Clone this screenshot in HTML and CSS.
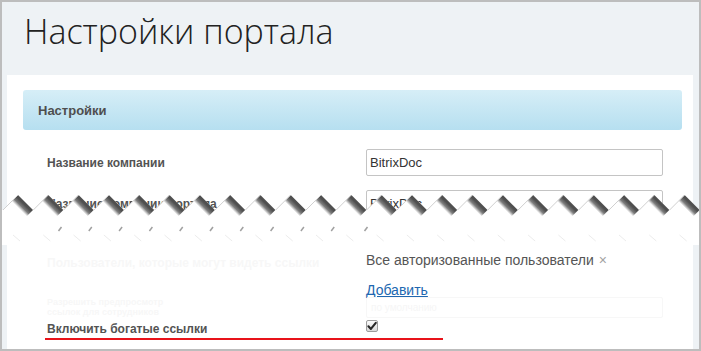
FILE: index.html
```html
<!DOCTYPE html>
<html lang="ru">
<head>
<meta charset="utf-8">
<title>Настройки портала</title>
<link rel="stylesheet" href="styles.css">
</head>
<body>
<div class="frame">
  <h1 class="title">Настройки портала</h1>
  <div class="panel">
    <div class="section-head">Настройки</div>
    <div class="row row-1">
      <div class="label">Название компании</div>
      <div class="input">BitrixDoc</div>
    </div>
    <div class="row row-2">
      <div class="label">Название компании портала</div>
      <div class="input">BitrixDoc</div>
    </div>
    <div class="row row-a">
      <div class="label ghost ghost-label">Пользователи, которые могут видеть ссылки</div>
      <div class="field">
        <div class="tag">Все авторизованные пользователи <span class="remove">×</span></div>
        <a class="add" href="#">Добавить</a>
      </div>
    </div>
    <div class="row row-c">
      <div class="label ghost ghost-two">Разрешить предпросмотр<br>ссылок для сотрудников</div>
      <div class="ghost-input">по умолчанию</div>
    </div>
    <div class="row row-d">
      <div class="label">Включить богатые ссылки</div>
      <div class="field">
        <span class="check"><svg viewBox="0 0 12 12" width="12" height="12"><path d="M2.4 6.3 L4.9 8.9 L9.8 2.8" fill="none" stroke="#262626" stroke-width="2.1" stroke-linecap="round" stroke-linejoin="round"/></svg></span>
      </div>
    </div>
    <div class="redline"></div>
  </div>
  <svg class="tear" viewBox="0 180 701 65" width="701" height="65">
    <defs>
      <linearGradient id="sh" x1="0.6" y1="0.4" x2="0.4" y2="0.6">
        <stop offset="0" stop-color="#505050"/>
        <stop offset="0.5" stop-color="#7c7c7c"/>
        <stop offset="1" stop-color="#ffffff"/>
      </linearGradient>
      <filter id="soft" x="-20%" y="-20%" width="140%" height="140%">
        <feGaussianBlur stdDeviation="0.7"/>
      </filter>
      <g id="tooth">
        <polygon points="0,195 15,210 7,218 -8,203" fill="url(#sh)" filter="url(#soft)"/>
        <line x1="-15" y1="210" x2="0" y2="195" stroke="#d0d0d0" stroke-width="1"/>
        <line x1="-5" y1="235" x2="2" y2="241" stroke="#ececec" stroke-width="1"/>
      </g>
      <path id="mark" d="M-1.5,231 L1.5,227" stroke="#a0a0a0" stroke-width="1.5"/>
    </defs>
    <path d="M0,210 L2.85,210 l15.15,-15 l15.15,15 l15.15,-15 l15.15,15 l15.15,-15 l15.15,15 l15.15,-15 l15.15,15 l15.15,-15 l15.15,15 l15.15,-15 l15.15,15 l15.15,-15 l15.15,15 l15.15,-15 l15.15,15 l15.15,-15 l15.15,15 l15.15,-15 l15.15,15 l15.15,-15 l15.15,15 l15.15,-15 l15.15,15 l15.15,-15 l15.15,15 l15.15,-15 l15.15,15 l15.15,-15 l15.15,15 l15.15,-15 l15.15,15 l15.15,-15 l15.15,15 l15.15,-15 l15.15,15 l15.15,-15 l15.15,15 l15.15,-15 l15.15,15 l15.15,-15 l15.15,15 l15.15,-15 l15.15,15 l15.15,-15 l15.15,15 L730,250 L0,250 Z" fill="#ffffff"/>
    <use href="#tooth" x="18"/>
    <use href="#tooth" x="48.3"/>
    <use href="#tooth" x="78.6"/>
    <use href="#tooth" x="108.9"/>
    <use href="#tooth" x="139.2"/>
    <use href="#tooth" x="169.5"/>
    <use href="#tooth" x="199.8"/>
    <use href="#tooth" x="230.1"/>
    <use href="#tooth" x="260.4"/>
    <use href="#tooth" x="290.7"/>
    <use href="#tooth" x="321"/>
    <use href="#tooth" x="351.3"/>
    <use href="#tooth" x="381.6"/>
    <use href="#tooth" x="411.9"/>
    <use href="#tooth" x="442.2"/>
    <use href="#tooth" x="472.5"/>
    <use href="#tooth" x="502.8"/>
    <use href="#tooth" x="533.1"/>
    <use href="#tooth" x="563.4"/>
    <use href="#tooth" x="593.7"/>
    <use href="#tooth" x="624"/>
    <use href="#tooth" x="654.3"/>
    <use href="#tooth" x="684.6"/>
    <use href="#mark" x="60"/>
    <use href="#mark" x="90.3"/>
    <use href="#mark" x="120.6"/>
    <use href="#mark" x="150.9"/>
    <use href="#mark" x="181.2"/>
    <use href="#mark" x="211.5"/>
    <use href="#mark" x="241.8"/>
    <use href="#mark" x="272.1"/>
    <use href="#mark" x="302.4"/>
    <use href="#mark" x="332.7"/>
    <use href="#mark" x="366"/>
  </svg>
</div>
</body>
</html>
```

FILE: styles.css
```css
body {
  margin: 0;
}

.frame {
  width: 701px;
  height: 351px;
  box-sizing: border-box;
  border: 2px solid #bdbdbd;
  background: #eef2f5;
  position: relative;
  overflow: hidden;
  display: flex;
  flex-direction: column;
  font-family: "Liberation Sans", Arial, sans-serif;
}

.title {
  margin: 0;
  height: 73px;
  flex: none;
  box-sizing: border-box;
  padding: 9px 0 0 22px;
  font-family: "Open Sans", sans-serif;
  font-weight: 300;
  font-size: 34px;
  line-height: 40px;
  color: #222;
}

.panel {
  flex: 1;
  margin: 0 6px 0 5px;
  background: #fff;
}

.section-head {
  margin: 15px 11px 0 16px;
  height: 40px;
  border-radius: 3px;
  background: linear-gradient(#d6eef7, #b6dff0);
  padding-left: 15px;
  font-weight: bold;
  font-size: 13px;
  line-height: 41px;
  color: #4e4e4e;
}

.row {
  display: grid;
  grid-template-columns: 359px 297px;
  align-items: center;
}

.label {
  padding-left: 40px;
  font-weight: bold;
  font-size: 12px;
  line-height: 16px;
  color: #535353;
}

.row-1 {
  margin-top: 19px;
}

.row-2 {
  margin-top: 14px;
}

.input {
  height: 27px;
  box-sizing: border-box;
  border: 1px solid #c4c4c4;
  border-radius: 2px;
  padding-left: 3px;
  font-size: 13px;
  line-height: 25px;
  color: #333;
}

.row-a {
  margin-top: 33px;
  align-items: start;
}

.ghost {
  color: #f7f7f7;
}

.ghost-label {
  margin-top: 5px;
}

.tag {
  font-size: 14px;
  line-height: 20px;
  color: #555;
}

.remove {
  color: #a3a3a3;
  margin-left: 1px;
}

.add {
  display: inline-block;
  margin-top: 10px;
  font-size: 14px;
  line-height: 20px;
  color: #2067b0;
  text-decoration: underline;
}

.row-c {
  margin-top: -3px;
  align-items: start;
}

.ghost-two {
  font-size: 9px;
  line-height: 10px;
}

.ghost-input {
  height: 21px;
  box-sizing: border-box;
  border: 1px solid #f7f7f7;
  border-radius: 2px;
  padding-left: 4px;
  font-size: 10px;
  line-height: 19px;
  color: #f6f6f6;
}

.row-d {
  margin-top: 3px;
  align-items: start;
}

.check {
  display: block;
  width: 12px;
  height: 12px;
  margin-top: -1px;
  box-sizing: border-box;
  border: 1px solid #9c9c9c;
  border-radius: 2px;
  background: linear-gradient(#fbfbfb, #d9d9d9);
}

.check svg {
  display: block;
  margin: -1px 0 0 -1px;
}

.redline {
  margin: 1px 0 0 38px;
  width: 398px;
  height: 2px;
  background: #e8131a;
}

.tear {
  position: absolute;
  left: -2px;
  top: 178px;
  display: block;
}
```
